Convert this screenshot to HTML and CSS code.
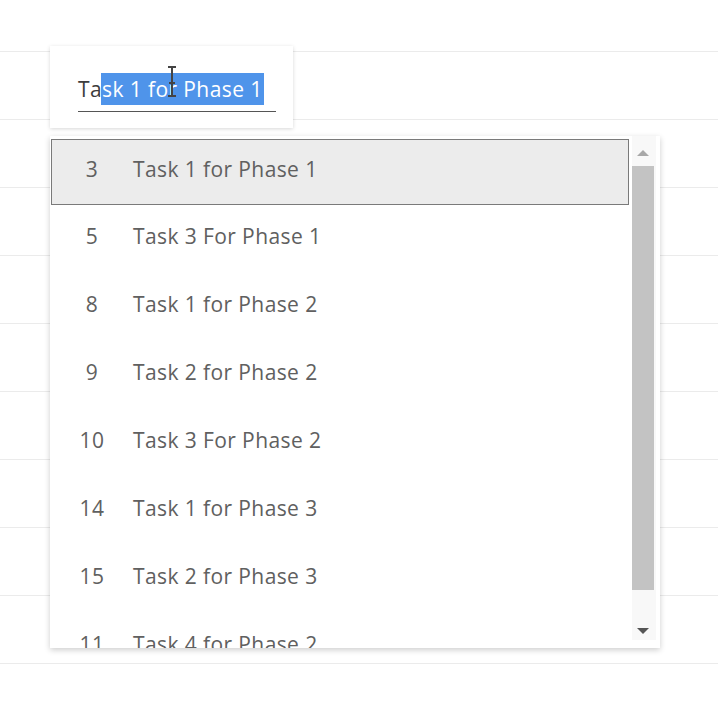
FILE: index.html
```html
<!DOCTYPE html>
<html>
<head>
<meta charset="utf-8">
<link rel="stylesheet" href="styles.css">
</head>
<body>
<div class="grid">
  <div class="row first"></div>
  <div class="row"></div>
  <div class="row"></div>
  <div class="row"></div>
  <div class="row"></div>
  <div class="row"></div>
  <div class="row"></div>
  <div class="row"></div>
  <div class="row"></div>
  <div class="row"></div>
</div>

<div class="editor">
  <div class="field"><span class="plain">Ta</span><span class="sel">sk 1 for Phase 1</span></div>
  <svg class="ibeam" width="12" height="32" viewBox="0 0 12 32">
    <path d="M2 1h8M6 1v29M2 30h8M3 17h6" stroke="#444" stroke-width="2" fill="none"/>
  </svg>
</div>

<div class="dropdown">
  <ul class="list">
    <li class="item active"><span class="num">3</span><span class="label">Task 1 for Phase 1</span></li>
    <li class="item"><span class="num">5</span><span class="label">Task 3 For Phase 1</span></li>
    <li class="item"><span class="num">8</span><span class="label">Task 1 for Phase 2</span></li>
    <li class="item"><span class="num">9</span><span class="label">Task 2 for Phase 2</span></li>
    <li class="item"><span class="num">10</span><span class="label">Task 3 For Phase 2</span></li>
    <li class="item"><span class="num">14</span><span class="label">Task 1 for Phase 3</span></li>
    <li class="item"><span class="num">15</span><span class="label">Task 2 for Phase 3</span></li>
    <li class="item"><span class="num">11</span><span class="label">Task 4 for Phase 2</span></li>
  </ul>
  <div class="scrollbar">
    <div class="arrow up"></div>
    <div class="thumb"></div>
    <div class="arrow down"></div>
  </div>
</div>
</body>
</html>
```

FILE: styles.css
```css
html, body {
  margin: 0;
  padding: 0;
  background: #ffffff;
  width: 718px;
  height: 712px;
  overflow: hidden;
  font-family: "Open Sans", "Noto Sans", sans-serif;
}

.grid {
  display: flex;
  flex-direction: column;
}

.row {
  height: 67px;
  border-bottom: 1px solid #ebebeb;
}

.row.first {
  height: 51px;
}

.editor {
  position: absolute;
  left: 50px;
  top: 46px;
  width: 243px;
  height: 82px;
  background: #fff;
  box-shadow: 0 1px 4px rgba(0,0,0,0.16);
  box-sizing: border-box;
  padding: 27px 17px 0 28px;
}

.field {
  font-size: 21px;
  line-height: 32px;
  color: #3c3c3c;
  border-bottom: 1.5px solid #555;
  padding-bottom: 6px;
  white-space: nowrap;
  letter-spacing: 0.4px;
}

.plain, .sel {
  display: inline-block;
  vertical-align: top;
}

.sel {
  background: #4f94ea;
  color: #fff;
  padding-right: 1px;
  margin-left: -1px;
  padding-left: 1px;
}

.ibeam {
  position: absolute;
  left: 116px;
  top: 20px;
}

.dropdown {
  position: absolute;
  left: 50px;
  top: 136px;
  width: 610px;
  height: 512px;
  background: #fff;
  box-shadow: 0 2px 6px rgba(0,0,0,0.2);
  display: flex;
  overflow: hidden;
}

.list {
  list-style: none;
  margin: 0;
  padding: 3px 0 0 1px;
  width: 578px;
  flex: none;
}

.item {
  height: 68px;
  display: flex;
  align-items: center;
  box-sizing: border-box;
  font-size: 21px;
  color: #606060;
  padding-bottom: 6px;
  white-space: nowrap;
  letter-spacing: 0.4px;
}

.item.active {
  height: 66px;
  background: #ececec;
  border: 1px solid #7a7a7a;
}

.item.active .num {
  margin-left: 16px;
}

.num {
  width: 48px;
  margin-left: 17px;
  text-align: center;
  flex: none;
}

.label {
  margin-left: 17px;
}

.scrollbar {
  margin-left: 3px;
  width: 24px;
  background: #f8f8f8;
  display: flex;
  flex-direction: column;
  align-items: flex-start;
  padding-top: 8px;
  box-sizing: border-box;
  height: 504px;
}

.arrow {
  width: 0;
  height: 0;
  border-left: 6px solid transparent;
  border-right: 6px solid transparent;
  margin-left: 5px;
}

.arrow.up {
  border-bottom: 6px solid #a8a8a8;
  margin-top: 6px;
}

.arrow.down {
  border-top: 6px solid #555;
  margin-top: 38px;
}

.thumb {
  width: 22px;
  height: 424px;
  background: #c3c3c3;
  margin-top: 10px;
}
```
